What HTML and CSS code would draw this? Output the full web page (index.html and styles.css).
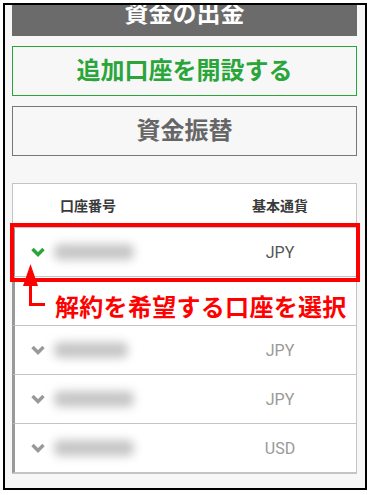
FILE: index.html
```html
<!DOCTYPE html>
<html lang="ja">
<head>
<meta charset="utf-8">
<link rel="stylesheet" href="styles.css">
</head>
<body>
<div class="frame">
  <div class="title-bar"><span>資金の出金</span></div>
  <div class="btn btn-green">追加口座を開設する</div>
  <div class="btn btn-gray">資金振替</div>
  <div class="table">
    <div class="thead">
      <div class="th">口座番号</div>
      <div></div>
      <div class="th">基本通貨</div>
    </div>
    <div class="row active">
      <div class="acct">
        <svg class="chev" width="14" height="10" viewBox="0 0 14 10"><polyline points="1.5,2 7,7.5 12.5,2" fill="none" stroke="currentColor" stroke-width="3.4"/></svg>
        <div class="blur w1"></div>
      </div>
      <div></div>
      <div class="cur">JPY</div>
    </div>
    <div class="row"></div>
    <div class="row">
      <div class="acct">
        <svg class="chev" width="14" height="10" viewBox="0 0 14 10"><polyline points="1.5,2 7,7.5 12.5,2" fill="none" stroke="currentColor" stroke-width="3.4"/></svg>
        <div class="blur w2"></div>
      </div>
      <div></div>
      <div class="cur">JPY</div>
    </div>
    <div class="row">
      <div class="acct">
        <svg class="chev" width="14" height="10" viewBox="0 0 14 10"><polyline points="1.5,2 7,7.5 12.5,2" fill="none" stroke="currentColor" stroke-width="3.4"/></svg>
        <div class="blur w3"></div>
      </div>
      <div></div>
      <div class="cur">JPY</div>
    </div>
    <div class="row">
      <div class="acct">
        <svg class="chev" width="14" height="10" viewBox="0 0 14 10"><polyline points="1.5,2 7,7.5 12.5,2" fill="none" stroke="currentColor" stroke-width="3.4"/></svg>
        <div class="blur w3"></div>
      </div>
      <div></div>
      <div class="cur">USD</div>
    </div>

    <div class="hl-box"></div>
    <svg class="arrow" width="32" height="48" viewBox="0 0 32 48">
      <polygon points="12.5,3 5,25 20,25" fill="#ff0000"/>
      <rect x="11" y="20" width="3" height="25" fill="#ff0000"/>
      <rect x="11" y="42" width="16" height="3" fill="#ff0000"/>
    </svg>
    <div class="note">解約を希望する口座を選択</div>
  </div>
</div>
</body>
</html>
```

FILE: styles.css
```css
* { box-sizing: border-box; }
html, body { margin: 0; padding: 0; background: #ffffff; }
body {
  font-family: "Noto Sans CJK JP", "Noto Sans", sans-serif;
  width: 371px;
  height: 495px;
  overflow: hidden;
}
.frame {
  margin: 3px 0 0 3px;
  width: 364px;
  height: 487px;
  border: 2px solid #000;
  background: #f7f7f7;
  padding: 0 8px 0 7px;
  overflow: hidden;
}
.title-bar {
  margin-top: -5px;
  height: 36px;
  background: #6b6b6b;
  color: #fff;
  font-size: 24px;
  font-weight: bold;
  line-height: 24px;
  text-align: center;
  padding-bottom: 12px;
  margin-bottom: 10px;
}
.btn {
  height: 50px;
  display: flex;
  align-items: center;
  justify-content: center;
  font-size: 24px;
  font-weight: bold;
  line-height: 30px;
  padding-bottom: 4px;
  background: #f7f7f7;
}
.btn-green {
  border: 1px solid #2aa53a;
  color: #2aa53a;
  margin-bottom: 10px;
}
.btn-gray {
  border: 1px solid #777;
  color: #666;
  margin-bottom: 27px;
}
.table {
  position: relative;
  background: #fff;
  border: 1px solid #c4c4c4;
}
.thead {
  display: grid;
  grid-template-columns: 150px 1fr 152px;
  height: 44px;
  align-items: center;
  border-bottom: 1px solid #c4c4c4;
}
.th {
  text-align: center;
  font-size: 14px;
  font-weight: bold;
  color: #3a3a3a;
  padding-bottom: 2px;
}
.row {
  display: grid;
  grid-template-columns: 150px 1fr 152px;
  align-items: center;
  height: 49px;
  border-left: 3px solid #999;
  border-bottom: 1px solid #c4c4c4;
  margin-left: -1px;
}
.row:last-of-type { border-bottom: none; }
.acct {
  display: flex;
  align-items: center;
  padding-left: 16px;
}
.chev { color: #999; display: block; margin-right: 9px; }
.row.active .chev { color: #2aa53a; }
.blur {
  height: 16px;
  background: #c6c6c6;
  filter: blur(5px);
  border-radius: 6px;
}
.w1 { width: 80px; }
.w2 { width: 74px; }
.w3 { width: 80px; }
.cur {
  text-align: center;
  font-family: Roboto, "Liberation Sans", sans-serif;
  font-size: 16px;
  color: #999;
}
.row.active .cur { color: #555; }
.hl-box {
  position: absolute;
  left: -3px;
  top: 39px;
  width: 350px;
  height: 59px;
  border: 4px solid #ff0000;
}
.arrow {
  position: absolute;
  left: 5px;
  top: 77px;
}
.note {
  position: absolute;
  left: 42px;
  top: 107px;
  font-size: 24px;
  font-weight: bold;
  color: #f00;
  letter-spacing: 0.3px;
  line-height: 30px;
  white-space: nowrap;
}
```
